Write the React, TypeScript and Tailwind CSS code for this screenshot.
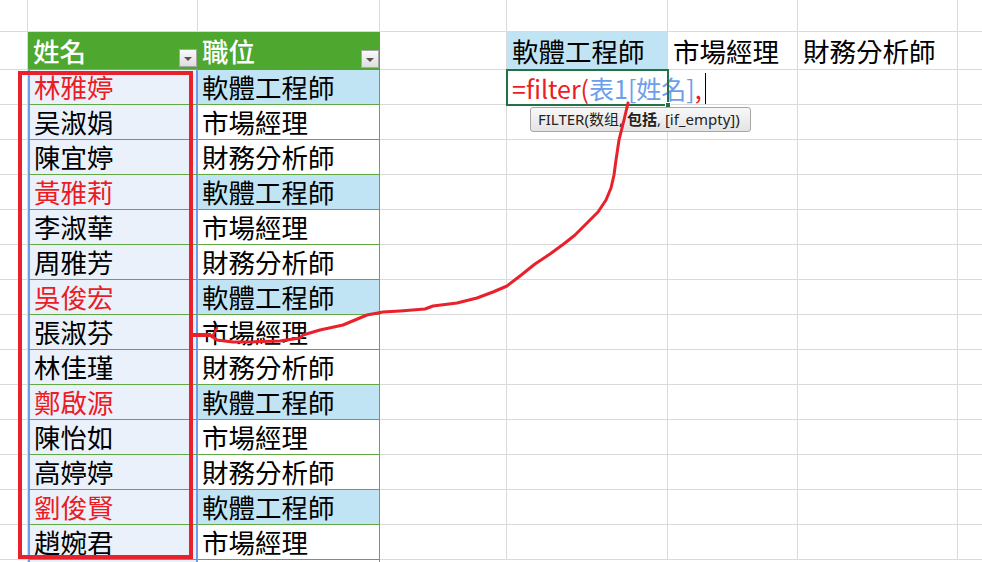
const rows = [
  { name: '林雅婷', job: '軟體工程師', mark: true },
  { name: '吴淑娟', job: '市場經理', mark: false },
  { name: '陳宜婷', job: '財務分析師', mark: false },
  { name: '黃雅莉', job: '軟體工程師', mark: true },
  { name: '李淑華', job: '市場經理', mark: false },
  { name: '周雅芳', job: '財務分析師', mark: false },
  { name: '吳俊宏', job: '軟體工程師', mark: true },
  { name: '張淑芬', job: '市場經理', mark: false },
  { name: '林佳瑾', job: '財務分析師', mark: false },
  { name: '鄭啟源', job: '軟體工程師', mark: true },
  { name: '陳怡如', job: '市場經理', mark: false },
  { name: '高婷婷', job: '財務分析師', mark: false },
  { name: '劉俊賢', job: '軟體工程師', mark: true },
  { name: '趙婉君', job: '市場經理', mark: false },
];

const arrow =
  '628,103 624,120 619,140 616,160 614,175 611,188 606,200 598,212 585,225 575,235 565,243 550,254 535,264 520,276 507,286 493,292 477,298 457,303 433,306 425,309 400,311 383,312 367,315 343,325 320,330 303,335 300,338 280,341 250,342 233,342 217,340 210,335';

function Gray({ w }: { w: string }) {
  return <div className={`h-full shrink-0 border-r border-b border-[#dadada] ${w}`} />;
}

function Filler() {
  return <div className="h-full flex-1 border-b border-[#dadada]" />;
}

function Dropdown() {
  return (
    <span className="mb-[2px] mr-px flex h-[18px] w-[18px] shrink-0 items-center justify-center self-end border border-[#a8a8a8] bg-gradient-to-b from-[#fafafa] to-[#dedede]">
      <span className="mt-[2px] h-0 w-0 border-x-[4px] border-t-[4px] border-x-transparent border-t-[#555]" />
    </span>
  );
}

export default function App() {
  return (
    <div className="relative h-[562px] w-[982px] overflow-hidden bg-white font-['Noto_Sans_CJK_TC','Noto_Sans_CJK_SC',sans-serif] text-[26.5px] leading-none text-black">
      {/* row above the table */}
      <div className="flex h-[32px]">
        <Gray w="w-[28px]" />
        <Gray w="w-[170px]" />
        <Gray w="w-[182px]" />
        <Gray w="w-[127px]" />
        <Gray w="w-[161px]" />
        <Gray w="w-[130px]" />
        <Gray w="w-[160px]" />
        <Filler />
      </div>

      {/* header row */}
      <div className="flex h-[38px]">
        <Gray w="w-[28px]" />
        <div className="flex h-full w-[170px] shrink-0 items-center border-b border-[#6d9eeb] bg-[#4ea72e] pl-[5px] font-medium text-white">
          <span className="flex-1 pt-px">姓名</span>
          <Dropdown />
        </div>
        <div className="flex h-full w-[182px] shrink-0 items-center bg-[#4ea72e] pl-[4px] font-medium text-white">
          <span className="flex-1 pt-px">職位</span>
          <Dropdown />
        </div>
        <Gray w="w-[127px]" />
        <div className="flex h-full w-[161px] shrink-0 items-center border-r border-b border-[#dadada] bg-[#c1e4f5] pl-[5px] pt-px">軟體工程師</div>
        <div className="flex h-full w-[130px] shrink-0 items-center border-r border-b border-[#dadada] pl-[5px] pt-px">市場經理</div>
        <div className="flex h-full w-[160px] shrink-0 items-center border-r border-b border-[#dadada] pl-[5px] pt-px">財務分析師</div>
        <Filler />
      </div>

      {rows.map((row, i) => (
        <div key={row.name} className="flex h-[35px]">
          <Gray w="w-[28px]" />
          <div className={`flex h-full w-[170px] shrink-0 items-center border-x-2 border-b border-x-[#6d9eeb] border-b-[#62a843] bg-[#eaf1fb] pl-[4px] pt-px ${row.mark ? 'text-[#ec1c24]' : ''}`}>
            {row.name}
          </div>
          <div className={`flex h-full w-[182px] shrink-0 items-center border-r border-b border-[#62a843] pl-[4px] pt-px ${row.mark ? 'bg-[#c1e4f5]' : ''}`}>
            {row.job}
          </div>
          <Gray w="w-[127px]" />
          {i === 0 ? (
            <div className="relative z-10 flex h-full w-[161px] shrink-0 items-center whitespace-nowrap pl-[5px] pt-px text-[25px]">
              <div className="absolute -inset-px border-2 border-[#217346]" />
              <div className="absolute -bottom-[3px] -right-[3px] h-[6px] w-[6px] border border-white bg-[#217346]" />
              <span className="text-[#ec1c24]">=filter(</span>
              <span className="text-[#6d9eeb]">表1[姓名]</span>
              <span className="text-[#ec1c24]">,</span>
              <span className="ml-[3px] inline-block h-[31px] w-px shrink-0 bg-black" />
            </div>
          ) : (
            <Gray w="w-[161px]" />
          )}
          <Gray w="w-[130px]" />
          <Gray w="w-[160px]" />
          <Filler />
        </div>
      ))}
      <div className="flex h-[10px]">
        <Gray w="w-[28px]" />
        <div className="h-full w-[170px] shrink-0 border-x-2 border-[#6d9eeb] bg-[#eaf1fb]" />
        <div className="h-full w-[182px] shrink-0 border-r border-[#62a843]" />
        <Filler />
      </div>

      {/* function hint */}
      <div className="absolute left-[530px] top-[107px] z-20 flex h-[25px] w-[221px] items-center whitespace-nowrap rounded-[3px] border border-[#a6a6a6] bg-gradient-to-b from-[#f8f8f8] to-[#e4e4e4] pl-[7px] font-['Noto_Sans','Noto_Sans_CJK_SC',sans-serif] text-[15px] text-[#222]">
        FILTER(数组, <b className="ml-[4px]">包括</b>, [if_empty])
      </div>

      {/* hand drawn markup */}
      <div className="pointer-events-none absolute left-[18px] top-[71px] z-30 h-[488px] w-[175px] border-4 border-[#e8212b]" />
      <svg className="pointer-events-none absolute inset-0 z-30" width="982" height="562" viewBox="0 0 982 562">
        <polyline points={arrow} fill="none" stroke="#e8212b" strokeWidth="3" strokeLinejoin="round" strokeLinecap="round" />
        <line x1="193" y1="335" x2="211" y2="335" stroke="#e8212b" strokeWidth="4" />
        <line x1="212" y1="337" x2="217" y2="328" stroke="#e8212b" strokeWidth="2.5" strokeLinecap="round" />
      </svg>
    </div>
  );
}
